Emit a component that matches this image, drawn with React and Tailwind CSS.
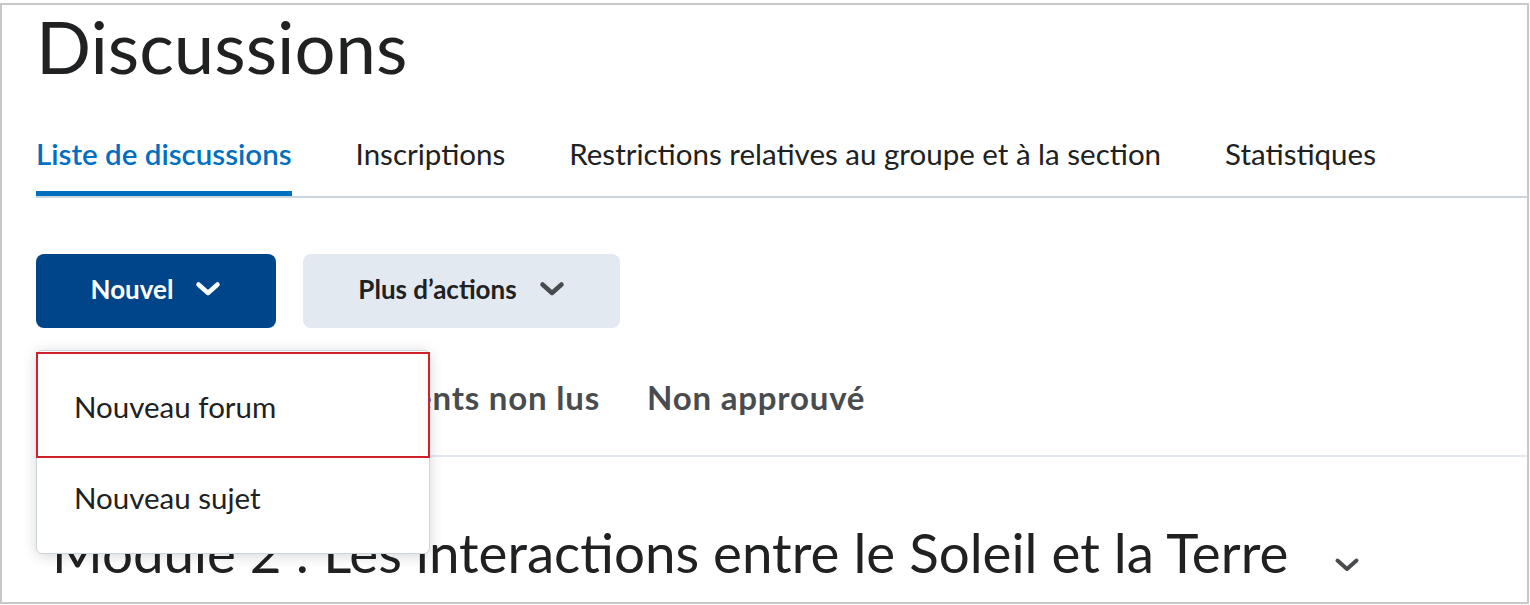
import React from "react";

function Chevron({ className, color = "currentColor", w = 26, h = 16, sw = 4.5 }) {
  return (
    <svg width={w} height={h} viewBox="0 0 26 16" className={className} fill="none">
      <polyline points="3.5,3.5 13,12 22.5,3.5" stroke={color} strokeWidth={sw} strokeLinecap="round" strokeLinejoin="round" />
    </svg>
  );
}

export default function App() {
  return (
    <div className="w-[1530px] h-[605px] bg-white pt-[3px] overflow-hidden" style={{ fontFamily: "Lato, 'Open Sans', sans-serif" }}>
      <div className="relative w-[1529px] h-[601px] border-2 border-[#c8c8c8] pl-[34px] overflow-hidden">
        <h1 className="text-[72.5px] leading-[74px] mt-[4px] text-[#202122] font-normal">Discussions</h1>

        <nav className="mt-[57px] flex gap-[64px] border-b-2 border-[#cdd5dc]">
          <div className="flex flex-col">
            <span className="text-[29.5px] leading-[28px] text-[#006fbf] font-semibold">Liste de discussions</span>
            <span className="mt-[23px] h-[5px] bg-[#006fbf]"></span>
          </div>
          <div className="flex flex-col">
            <span className="text-[29.5px] leading-[28px] text-[#202122]">Inscriptions</span>
          </div>
          <div className="flex flex-col">
            <span className="text-[29.5px] leading-[28px] text-[#202122]">Restrictions relatives au groupe et à la section</span>
          </div>
          <div className="flex flex-col">
            <span className="text-[29.5px] leading-[28px] text-[#202122]">Statistiques</span>
          </div>
        </nav>

        <div className="mt-[56px] flex gap-[27px]">
          <button className="w-[240px] h-[74px] rounded-[8px] bg-[#004489] text-white flex items-center justify-center gap-[22px] pb-[4px]">
            <span className="text-[26px] font-bold leading-none">Nouvel</span>
            <Chevron color="#ffffff" />
          </button>
          <button className="w-[317px] h-[74px] rounded-[8px] bg-[#e3e9f1] text-[#202122] flex items-center justify-center gap-[22px] pb-[4px]">
            <span className="text-[26px] font-bold leading-none">Plus d’actions</span>
            <Chevron color="#494c4e" />
          </button>
        </div>

        <div className="mt-[54px] flex gap-[47px] pb-[43px] border-b-2 border-[#e3e9f1] text-[33px] leading-[30px] font-bold tracking-[0.8px] text-[#494c4e] whitespace-nowrap">
          <div className="ml-[16px] w-[548px] flex justify-between">
            <span>Tous les sujets</span>
            <span>Éléments non lus</span>
          </div>
          <span>Non approuvé</span>
        </div>

        <div className="mt-[68px] ml-[16px] flex items-center">
          <h2 className="text-[54.7px] leading-[55px] text-[#202122] font-normal whitespace-nowrap">Module 2 : Les interactions entre le Soleil et la Terre</h2>
          <Chevron className="ml-[46px] mt-[24px]" color="#494c4e" w={26} h={16} sw={4} />
        </div>

        <div className="absolute left-[34px] top-[345px] w-[394px] h-[204px] bg-white border border-[#cdd5dc] rounded-[6px] shadow-[0_2px_14px_rgba(0,0,0,0.16)]">
          <div className="h-[106px] border-2 border-[#d0202a] flex items-center pl-[36px] -mx-px mt-px">
            <span className="text-[29.5px] text-[#202122] mt-[4px]">Nouveau forum</span>
          </div>
          <div className="h-[96px] pl-[37px] pt-[22px]">
            <span className="block text-[29.5px] leading-[36px] text-[#202122]">Nouveau sujet</span>
          </div>
        </div>
      </div>
    </div>
  );
}
